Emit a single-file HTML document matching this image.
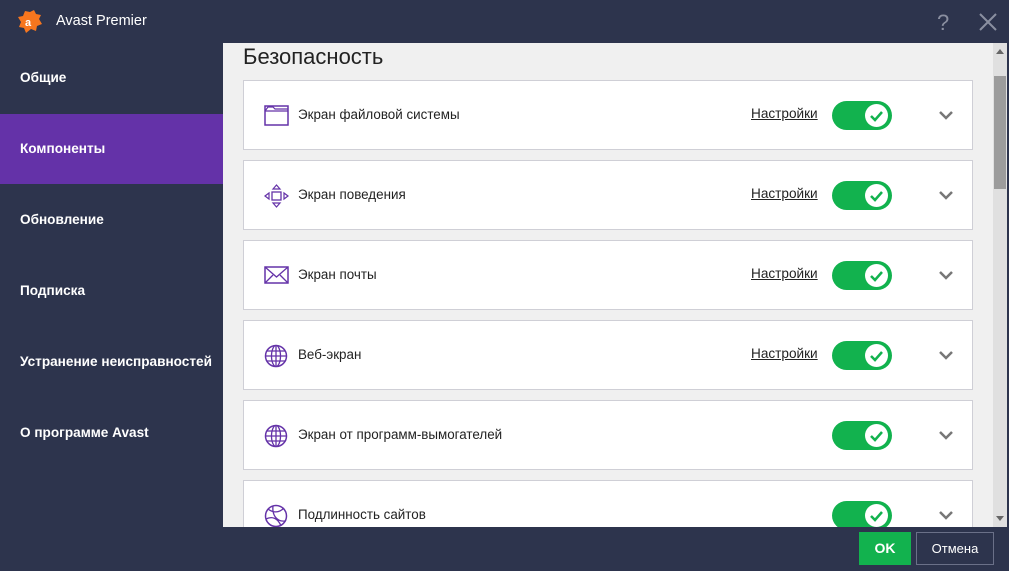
<!DOCTYPE html>
<html><head><meta charset="utf-8"><style>
*{margin:0;padding:0;box-sizing:border-box}
body{width:1009px;height:571px;background:#2d344d;font-family:"Liberation Sans","DejaVu Sans",sans-serif;position:relative;overflow:hidden}
.title{position:absolute;left:56px;top:13px;color:#fff;font-size:14.5px}
.side{position:absolute;left:20px;color:#fff;font-size:13.6px;font-weight:bold}
.sel{position:absolute;left:0;top:114px;width:223px;height:70px;background:#6432a8}
.content{position:absolute;left:223px;top:43px;width:770px;height:484px;background:#f0f0f0;overflow:hidden}
h1{position:absolute;left:20px;top:1px;font-weight:normal;font-size:22px;color:#222}
.card{position:absolute;left:20px;width:730px;height:70px;background:#fff;border:1px solid #cfcfd6}
.card .lbl{position:absolute;left:54px;top:26px;font-size:13.4px;color:#222}
.card .ic{position:absolute;left:20px;top:23px}
.set{position:absolute;left:507px;top:25px;font-size:13.6px;color:#222;text-decoration:underline}
.tg{position:absolute;left:588px;top:20px;width:60px;height:29px;border-radius:15px;background:#12b24e}
.tg .k{position:absolute;right:4px;top:3px;width:23px;height:23px;border-radius:50%;background:#fff}
.chev{position:absolute;left:695px;top:29px}
.sb{position:absolute;left:993px;top:43px;width:14px;height:484px;background:#e0e0e0}
.thumb{position:absolute;left:1px;top:33px;width:12px;height:113px;background:#9c9c9c}
.ok{position:absolute;left:859px;top:532px;width:52px;height:33px;background:#12b24e;color:#fff;font-weight:bold;font-size:14px;text-align:center;line-height:33px}
.cn{position:absolute;left:916px;top:532px;width:78px;height:33px;border:1px solid #6a7088;color:#fff;font-size:13px;text-align:center;line-height:31px}
</style></head><body>
<svg style="position:absolute;left:17px;top:9px" width="26" height="25" viewBox="0 0 26 25"><path d="M13 3 L17 1 L19 5 L24 6 L22 10 L25 15 L20 17 L19 22 L14 20 L9 24 L7 19 L2 18 L4 13 L1 8 L6 7 L8 2 Z" fill="#f7761e"/><text x="8" y="17" font-size="11" font-weight="bold" fill="#fff" font-family="Liberation Sans">a</text></svg>
<div class="title">Avast Premier</div>
<svg style="position:absolute;left:937px;top:11px" width="16" height="22"><text x="0" y="19" font-size="22" fill="#8a8fa0" font-family="Liberation Sans">?</text></svg>
<svg style="position:absolute;left:978px;top:12px" width="20" height="20"><path d="M2 2L18 18M18 2L2 18" stroke="#8a8fa0" stroke-width="2"/></svg>
<div class="sel"></div>
<div class="side" style="top:70px">Общие</div>
<div class="side" style="top:141px">Компоненты</div>
<div class="side" style="top:212px">Обновление</div>
<div class="side" style="top:283px">Подписка</div>
<div class="side" style="top:354px">Устранение неисправностей</div>
<div class="side" style="top:425px">О программе Avast</div>
<div class="content">
<h1>Безопасность</h1>
<div class="card" style="top:37px"><svg class="ic" width="25" height="22"><rect x="1" y="2" width="23" height="19" fill="none" stroke="#6432a8" stroke-width="1.5"/><path d="M1 7H24M1 7L4 3H9L11 5H24" fill="none" stroke="#6432a8" stroke-width="1.2"/></svg><div class="lbl">Экран файловой системы</div><div class="set">Настройки</div><div class="tg"><div class="k"><svg width="23" height="23"><path d="M6 12l4 4 7-8" fill="none" stroke="#12b24e" stroke-width="2.5"/></svg></div></div><svg class="chev" width="14" height="10"><path d="M1 2l6 6 6-6" fill="none" stroke="#777" stroke-width="2.5"/></svg></div>
<div class="card" style="top:117px"><svg class="ic" width="25" height="24"><rect x="8" y="8" width="9" height="8" fill="none" stroke="#6432a8" stroke-width="1.3"/><path d="M12.5 1L9 5H16ZM12.5 23L9 19H16ZM1 12L5 9V15ZM24 12L20 9V15Z" fill="none" stroke="#6432a8" stroke-width="1.2"/></svg><div class="lbl">Экран поведения</div><div class="set">Настройки</div><div class="tg"><div class="k"><svg width="23" height="23"><path d="M6 12l4 4 7-8" fill="none" stroke="#12b24e" stroke-width="2.5"/></svg></div></div><svg class="chev" width="14" height="10"><path d="M1 2l6 6 6-6" fill="none" stroke="#777" stroke-width="2.5"/></svg></div>
<div class="card" style="top:197px"><svg class="ic" width="25" height="22"><rect x="1" y="3" width="23" height="16" fill="none" stroke="#6432a8" stroke-width="1.5"/><path d="M1 3L12.5 13L24 3M1 19L9 11M24 19L16 11" fill="none" stroke="#6432a8" stroke-width="1.3"/></svg><div class="lbl">Экран почты</div><div class="set">Настройки</div><div class="tg"><div class="k"><svg width="23" height="23"><path d="M6 12l4 4 7-8" fill="none" stroke="#12b24e" stroke-width="2.5"/></svg></div></div><svg class="chev" width="14" height="10"><path d="M1 2l6 6 6-6" fill="none" stroke="#777" stroke-width="2.5"/></svg></div>
<div class="card" style="top:277px"><svg class="ic" width="25" height="24"><circle cx="12" cy="12" r="10.5" fill="none" stroke="#6432a8" stroke-width="1.5"/><ellipse cx="12" cy="12" rx="4.5" ry="10.5" fill="none" stroke="#6432a8" stroke-width="1.3"/><path d="M12 1.5V22.5M1.5 12H22.5M3 7H21M3 17H21" stroke="#6432a8" stroke-width="1.3"/></svg><div class="lbl">Веб-экран</div><div class="set">Настройки</div><div class="tg"><div class="k"><svg width="23" height="23"><path d="M6 12l4 4 7-8" fill="none" stroke="#12b24e" stroke-width="2.5"/></svg></div></div><svg class="chev" width="14" height="10"><path d="M1 2l6 6 6-6" fill="none" stroke="#777" stroke-width="2.5"/></svg></div>
<div class="card" style="top:357px"><svg class="ic" width="25" height="24"><circle cx="12" cy="12" r="10.5" fill="none" stroke="#6432a8" stroke-width="1.5"/><ellipse cx="12" cy="12" rx="4.5" ry="10.5" fill="none" stroke="#6432a8" stroke-width="1.3"/><path d="M12 1.5V22.5M1.5 12H22.5M3 7H21M3 17H21" stroke="#6432a8" stroke-width="1.3"/></svg><div class="lbl">Экран от программ-вымогателей</div><div class="tg"><div class="k"><svg width="23" height="23"><path d="M6 12l4 4 7-8" fill="none" stroke="#12b24e" stroke-width="2.5"/></svg></div></div><svg class="chev" width="14" height="10"><path d="M1 2l6 6 6-6" fill="none" stroke="#777" stroke-width="2.5"/></svg></div>
<div class="card" style="top:437px"><svg class="ic" width="25" height="24"><circle cx="12" cy="12" r="10.5" fill="none" stroke="#6432a8" stroke-width="1.5"/><path d="M4 5C9 9 15 9 20 4M2 15C8 12 14 14 17 22M9 2C8 10 12 18 21 17" fill="none" stroke="#6432a8" stroke-width="1.3"/></svg><div class="lbl">Подлинность сайтов</div><div class="tg"><div class="k"><svg width="23" height="23"><path d="M6 12l4 4 7-8" fill="none" stroke="#12b24e" stroke-width="2.5"/></svg></div></div><svg class="chev" width="14" height="10"><path d="M1 2l6 6 6-6" fill="none" stroke="#777" stroke-width="2.5"/></svg></div>
</div>
<div class="sb"><svg style="position:absolute;left:3px;top:6px" width="8" height="5"><path d="M0 5L4 0L8 5Z" fill="#666"/></svg><div class="thumb"></div><svg style="position:absolute;left:3px;top:473px" width="8" height="5"><path d="M0 0L4 5L8 0Z" fill="#666"/></svg></div>
<div class="ok">OK</div>
<div class="cn">Отмена</div>
</body></html>
